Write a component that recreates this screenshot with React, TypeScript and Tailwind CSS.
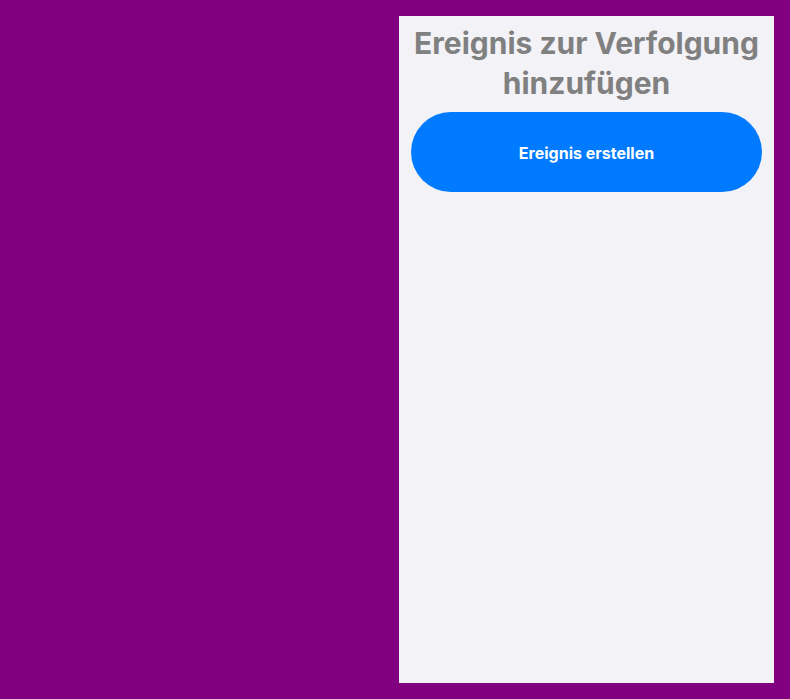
export default function App() {
  return (
    <div className="w-[790px] h-[699px] bg-[#800080] flex justify-end p-4" style={{ fontFamily: 'Inter, "Noto Sans", sans-serif' }}>
      <div className="w-[375px] h-[667px] bg-[#f2f2f7] flex flex-col">
        <h1 className="mt-[7px] text-center text-[30px] leading-[40px] font-bold text-[#808080] px-2">
          Ereignis zur Verfolgung hinzufügen
        </h1>
        <button className="mt-[9px] mx-3 h-20 pt-[2px] rounded-full bg-[#007aff] text-white text-[16px] font-bold flex items-center justify-center">
          Ereignis erstellen
        </button>
      </div>
    </div>
  );
}
